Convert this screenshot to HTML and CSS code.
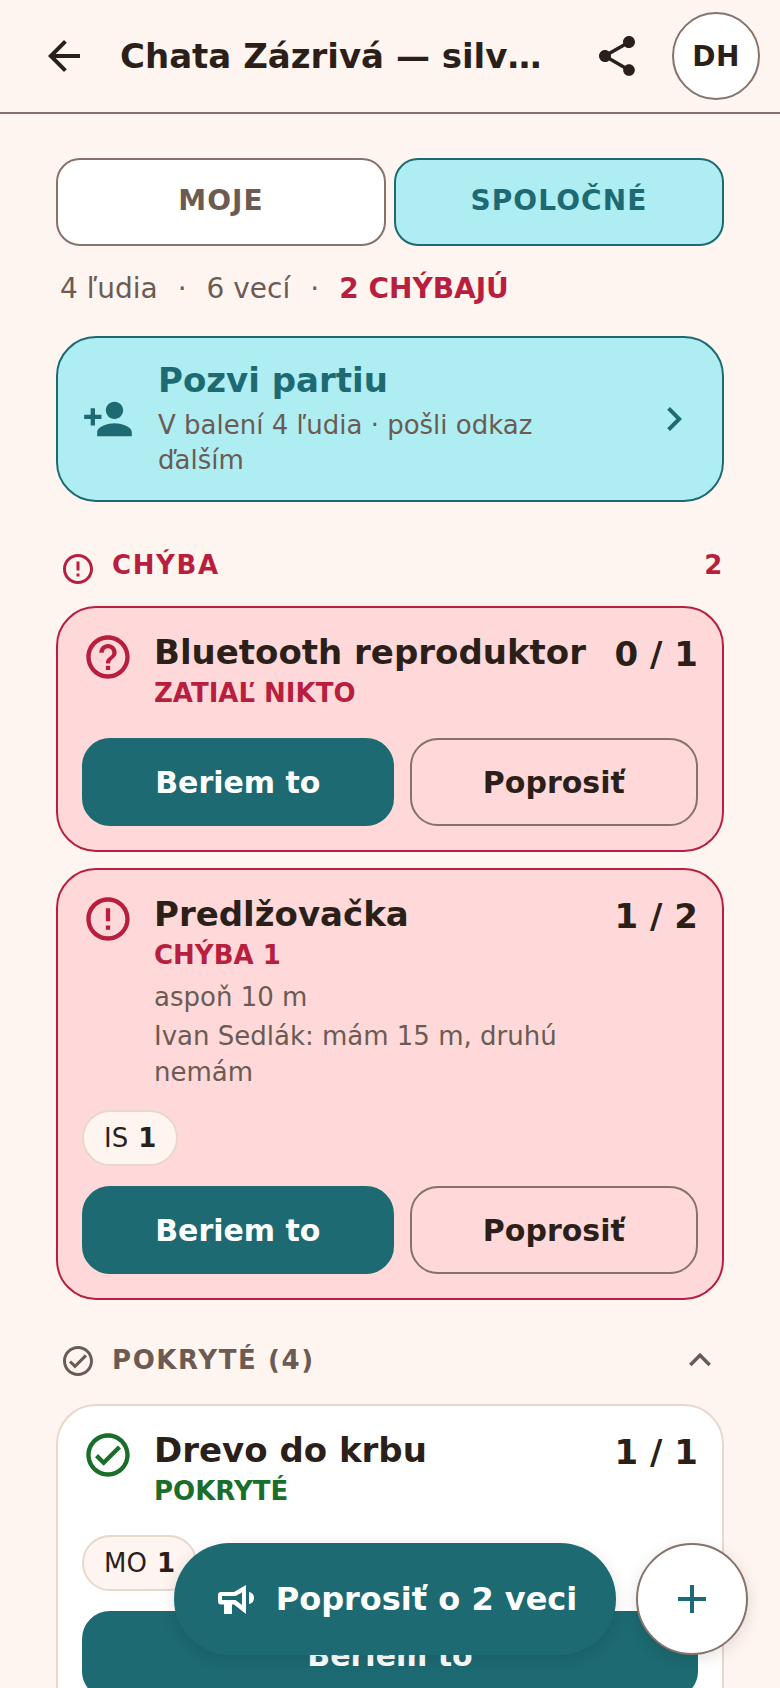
FILE: index.html
```html
<!DOCTYPE html>
<html lang="sk">

<head>
  <meta charset="UTF-8">
  <meta name="viewport" content="width=device-width, initial-scale=1.0">
  <title>Chata Zázrivá</title>
  <link rel="stylesheet" href="styles.css">
</head>

<body>
  <div class="page">
    <header class="topbar">
      <button class="icon-btn back">
        <svg width="48" height="48" viewBox="0 0 24 24"><path d="M20 11H7.83l5.59-5.59L12 4l-8 8 8 8 1.41-1.41L7.83 13H20z" /></svg>
      </button>
      <h1 class="title">Chata Zázrivá — silv…</h1>
      <button class="icon-btn share">
        <svg width="48" height="48" viewBox="0 0 24 24"><path d="M18 16.08c-.76 0-1.44.3-1.96.77L8.91 12.7c.05-.23.09-.46.09-.7s-.04-.47-.09-.7l7.05-4.11c.54.5 1.25.81 2.04.81 1.66 0 3-1.34 3-3s-1.34-3-3-3-3 1.34-3 3c0 .24.04.47.09.7L8.04 9.81C7.5 9.31 6.79 9 6 9c-1.66 0-3 1.34-3 3s1.34 3 3 3c.79 0 1.5-.31 2.04-.81l7.12 4.16c-.05.21-.08.43-.08.65 0 1.61 1.31 2.92 2.92 2.92s2.92-1.31 2.92-2.92-1.31-2.92-2.92-2.92z" /></svg>
      </button>
      <div class="avatar">DH</div>
    </header>

    <main class="content">
      <div class="tabs">
        <div class="tab">MOJE</div>
        <div class="tab active">SPOLOČNÉ</div>
      </div>

      <p class="summary">
        <span>4 ľudia</span><span class="dot">·</span><span>6 vecí</span><span class="dot">·</span><b>2 CHÝBAJÚ</b>
      </p>

      <div class="invite">
        <svg class="invite-icon" width="52" height="52" viewBox="0 0 24 24"><path d="M15 12c2.21 0 4-1.79 4-4s-1.79-4-4-4-4 1.79-4 4 1.79 4 4 4zm-9-2V7H4v3H1v2h3v3h2v-3h3v-2H6zm9 4c-2.67 0-8 1.34-8 4v2h16v-2c0-2.66-5.33-4-8-4z" /></svg>
        <div class="invite-text">
          <div class="invite-title">Pozvi partiu</div>
          <div class="invite-sub">V balení 4 ľudia · pošli odkaz ďalším</div>
        </div>
        <svg class="invite-arrow" width="48" height="48" viewBox="0 0 24 24"><path d="M10 6L8.59 7.41 13.17 12l-4.58 4.59L10 18l6-6z" /></svg>
      </div>

      <div class="section-head missing">
        <svg width="36" height="36" viewBox="0 0 24 24"><path d="M11 15h2v2h-2zm0-8h2v6h-2zm.99-5C6.47 2 2 6.48 2 12s4.47 10 9.99 10C17.52 22 22 17.52 22 12S17.52 2 11.99 2zM12 20c-4.42 0-8-3.58-8-8s3.58-8 8-8 8 3.58 8 8-3.58 8-8 8z" /></svg>
        <span class="section-name">CHÝBA</span>
        <span class="section-count">2</span>
      </div>

      <div class="item item-missing">
        <div class="item-top">
          <svg class="status-icon" width="52" height="52" viewBox="0 0 24 24"><path d="M11 18h2v-2h-2v2zm1-16C6.48 2 2 6.48 2 12s4.48 10 10 10 10-4.48 10-10S17.52 2 12 2zm0 18c-4.41 0-8-3.59-8-8s3.59-8 8-8 8 3.59 8 8-3.59 8-8 8zm0-14c-2.21 0-4 1.79-4 4h2c0-1.1.9-2 2-2s2 .9 2 2c0 2-3 1.75-3 5h2c0-2.25 3-2.5 3-5 0-2.21-1.79-4-4-4z" /></svg>
          <div class="item-body">
            <div class="item-name">Bluetooth reproduktor</div>
            <div class="item-state">ZATIAĽ NIKTO</div>
          </div>
          <div class="item-qty">0 / 1</div>
        </div>
        <div class="actions">
          <button class="btn primary">Beriem to</button>
          <button class="btn outline">Poprosiť</button>
        </div>
      </div>

      <div class="item item-missing">
        <div class="item-top">
          <svg class="status-icon" width="52" height="52" viewBox="0 0 24 24"><path d="M11 15h2v2h-2zm0-8h2v6h-2zm.99-5C6.47 2 2 6.48 2 12s4.47 10 9.99 10C17.52 22 22 17.52 22 12S17.52 2 11.99 2zM12 20c-4.42 0-8-3.58-8-8s3.58-8 8-8 8 3.58 8 8-3.58 8-8 8z" /></svg>
          <div class="item-body">
            <div class="item-name">Predlžovačka</div>
            <div class="item-state">CHÝBA 1</div>
            <div class="item-note">aspoň 10 m</div>
            <div class="item-note">Ivan Sedlák: mám 15 m, druhú nemám</div>
          </div>
          <div class="item-qty">1 / 2</div>
        </div>
        <div class="chips"><span class="chip">IS <b>1</b></span></div>
        <div class="actions">
          <button class="btn primary">Beriem to</button>
          <button class="btn outline">Poprosiť</button>
        </div>
      </div>

      <div class="section-head covered">
        <svg width="36" height="36" viewBox="0 0 24 24"><path d="M12 2C6.48 2 2 6.48 2 12s4.48 10 10 10 10-4.48 10-10S17.52 2 12 2zm0 18c-4.41 0-8-3.59-8-8s3.59-8 8-8 8 3.59 8 8-3.59 8-8 8zm4.59-12.42L10 14.17l-2.59-2.58L6 13l4 4 8-8z" /></svg>
        <span class="section-name">POKRYTÉ (4)</span>
        <svg class="collapse" width="44" height="44" viewBox="0 0 24 24"><path d="M12 8l-6 6 1.41 1.41L12 10.83l4.59 4.58L18 14z" /></svg>
      </div>

      <div class="item item-ok">
        <div class="item-top">
          <svg class="status-icon" width="52" height="52" viewBox="0 0 24 24"><path d="M12 2C6.48 2 2 6.48 2 12s4.48 10 10 10 10-4.48 10-10S17.52 2 12 2zm0 18c-4.41 0-8-3.59-8-8s3.59-8 8-8 8 3.59 8 8-3.59 8-8 8zm4.59-12.42L10 14.17l-2.59-2.58L6 13l4 4 8-8z" /></svg>
          <div class="item-body">
            <div class="item-name">Drevo do krbu</div>
            <div class="item-state">POKRYTÉ</div>
          </div>
          <div class="item-qty">1 / 1</div>
        </div>
        <div class="chips"><span class="chip">MO <b>1</b></span></div>
        <div class="actions">
          <button class="btn primary">Beriem to</button>
        </div>
      </div>
    </main>

    <button class="fab-ask">
      <svg width="44" height="44" viewBox="0 0 44 44"><path fill-rule="evenodd" d="M8 15h13l12-7v29l-12-9.5h-2v9.5h-8v-9.5h-3a3 3 0 0 1-3-3v-6.5a3 3 0 0 1 3-3zM9 19v4h13.5l6.5 5V15.5l-6.5 3.5zM36 15a6.1 6.1 0 0 1 0 12z" /></svg>
      Poprosiť o 2 veci
    </button>
    <button class="fab-add">
      <svg width="48" height="48" viewBox="0 0 24 24"><path d="M19 13h-6v6h-2v-6H5v-2h6V5h2v6h6z" /></svg>
    </button>
  </div>
</body>

</html>
```

FILE: styles.css
```css
* {
  margin: 0;
  padding: 0;
  box-sizing: border-box;
}

body {
  background-color: #fff5f0;
  font-family: "DejaVu Sans", sans-serif;
  color: #2b1f1a;
}

button {
  font-family: inherit;
  border: none;
  background: none;
}

.page {
  position: relative;
  width: 780px;
  height: 1688px;
  overflow: hidden;
}

/* top bar */
.topbar {
  display: flex;
  align-items: center;
  height: 114px;
  padding: 0 20px 0 40px;
  border-bottom: 2px solid #85736b;
}

.icon-btn {
  display: flex;
  flex-shrink: 0;
  fill: #2b1f1a;
}

.title {
  width: 424px;
  margin-left: 32px;
  font-size: 34px;
  font-weight: 700;
  white-space: nowrap;
}

.share {
  margin-left: 49px;
}

.avatar {
  display: flex;
  align-items: center;
  justify-content: center;
  flex-shrink: 0;
  width: 88px;
  height: 88px;
  margin-left: 31px;
  background-color: #fff;
  border: 2px solid #85736b;
  border-radius: 50%;
  font-size: 28px;
  font-weight: 700;
  letter-spacing: 0.5px;
}

/* content */
.content {
  padding: 44px 56px 0;
}

.tabs {
  display: flex;
  gap: 8px;
}

.tab {
  display: flex;
  align-items: center;
  justify-content: center;
  flex: 1;
  height: 88px;
  padding-bottom: 4px;
  background-color: #fff;
  border: 2px solid #85736b;
  border-radius: 24px;
  font-size: 28px;
  font-weight: 700;
  letter-spacing: 1.1px;
  color: #6b5b53;
}

.tab.active {
  background-color: #aeedf2;
  border-color: #1d6a72;
  color: #1d6a72;
}

.summary {
  display: flex;
  align-items: center;
  height: 40px;
  margin-top: 22px;
  padding-left: 4px;
  font-size: 28px;
  color: #6b5b53;
}

.summary .dot {
  margin: 0 20px;
}

.summary b {
  color: #b81f3f;
}

.invite {
  display: flex;
  align-items: center;
  height: 166px;
  margin-top: 28px;
  padding: 0 24px;
  background-color: #aeedf2;
  border: 2px solid #1d6a72;
  border-radius: 40px;
}

.invite-icon {
  flex-shrink: 0;
  fill: #1d6a72;
}

.invite-text {
  flex: 1;
  margin-left: 24px;
  padding-bottom: 4px;
}

.invite-title {
  font-size: 34px;
  line-height: 48px;
  font-weight: 700;
  color: #1d6a72;
}

.invite-sub {
  width: 400px;
  margin-top: 4px;
  font-size: 26px;
  line-height: 35px;
  color: #6b5b53;
}

.invite-arrow {
  flex-shrink: 0;
  fill: #1d6a72;
}

/* sections */
.section-head {
  display: flex;
  align-items: center;
  height: 40px;
  padding-left: 4px;
  font-size: 26px;
  font-weight: 700;
  letter-spacing: 1.6px;
}

.section-head.missing {
  margin-top: 43px;
  color: #b81f3f;
  fill: #b81f3f;
}

.section-head.missing svg {
  margin-top: 8px;
}

.section-head.covered {
  margin-top: 40px;
  margin-bottom: 24px;
  color: #6b5b53;
  fill: #6b5b53;
}

.section-head.covered svg {
  margin-top: 2px;
}

.section-name {
  flex: 1;
  margin-left: 16px;
}

.section-head.covered .collapse {
  margin-top: 0;
  margin-right: 2px;
}

/* cards */
.item {
  margin-top: 21px;
  padding: 22px 24px 24px;
  border: 2px solid #b81f3f;
  border-radius: 40px;
}

.item + .item {
  margin-top: 16px;
}

.section-head + .item-ok {
  margin-top: 0;
}

.item-missing {
  background-color: #ffd9d9;
  fill: #b81f3f;
}

.item-ok {
  background-color: #fff;
  border-color: #e8d8cc;
  fill: #1b6e2a;
}

.item-top {
  display: flex;
  align-items: flex-start;
}

.status-icon {
  flex-shrink: 0;
  margin-top: 1px;
}

.item-body {
  flex: 1;
  margin-left: 20px;
}

.item-name {
  font-size: 34px;
  line-height: 44px;
  font-weight: 700;
}

.item-state {
  margin-top: 3px;
  margin-bottom: 8px;
  font-size: 26px;
  line-height: 32px;
  font-weight: 700;
  color: #b81f3f;
}

.item-ok .item-state {
  color: #1b6e2a;
}

.item-note {
  font-size: 26px;
  line-height: 36px;
  color: #6b5b53;
}

.item-note + .item-note {
  margin-top: 3px;
}

.item-qty {
  flex-shrink: 0;
  margin-top: 2px;
  font-size: 34px;
  line-height: 44px;
  font-weight: 700;
}

.chips {
  display: flex;
  margin-top: 20px;
}

.chip {
  display: flex;
  align-items: center;
  gap: 10px;
  height: 56px;
  padding: 0 20px;
  background-color: #fff5f0;
  border: 2px solid #e8d8cc;
  border-radius: 28px;
  font-size: 26px;
}

.actions {
  display: flex;
  gap: 16px;
  margin-top: 21px;
}

.chips + .actions {
  margin-top: 20px;
}

.btn {
  display: flex;
  align-items: center;
  justify-content: center;
  flex: 1 1 auto;
  height: 88px;
  border-radius: 28px;
  font-size: 30px;
  font-weight: 700;
}

.btn.primary {
  border: 2px solid #1d6a72;
  background-color: #1d6a72;
  color: #fff;
}

.btn.outline {
  border: 2px solid #85736b;
  color: #2b1f1a;
}

/* floating buttons */
.fab-ask {
  position: absolute;
  left: 174px;
  top: 1543px;
  display: flex;
  align-items: center;
  justify-content: center;
  gap: 19px;
  width: 442px;
  height: 112px;
  background-color: #1d6a72;
  border-radius: 56px;
  box-shadow: 0 4px 16px rgba(0, 0, 0, 0.12);
  color: #fff;
  fill: #fff;
  font-size: 32px;
  font-weight: 700;
}

.fab-add {
  position: absolute;
  left: 636px;
  top: 1543px;
  display: flex;
  align-items: center;
  justify-content: center;
  width: 112px;
  height: 112px;
  background-color: #fff;
  border: 2px solid #85736b;
  border-radius: 50%;
  box-shadow: 0 4px 16px rgba(0, 0, 0, 0.12);
  fill: #1d6a72;
}
```
